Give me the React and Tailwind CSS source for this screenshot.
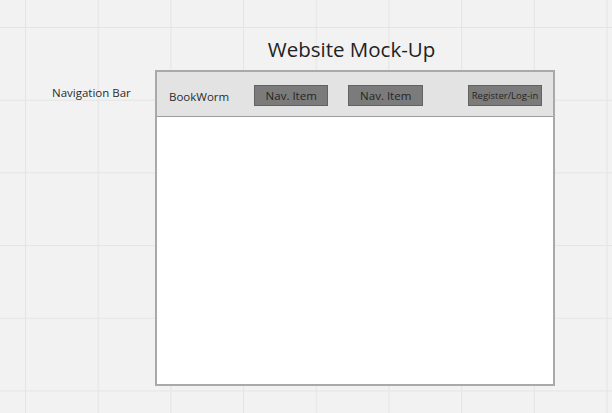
export default function App() {
  return (
    <div className="w-[612px] h-[413px] overflow-hidden bg-[#f2f2f2] bg-[linear-gradient(to_right,#e4e4e4_1px,transparent_1px),linear-gradient(to_bottom,#e4e4e4_1px,transparent_1px)] bg-[size:72.7px_72.7px] bg-[position:25px_27px] font-['Open_Sans',sans-serif] text-[#2b2b2b]">
      {/* Title */}
      <div className="pt-[35px] pl-[155px] w-[555px]">
        <h1 className="text-center pr-[7px] text-[20.5px] leading-[28px] text-[#222]">Website Mock-Up</h1>
      </div>

      <div className="flex mt-[7px]">
        {/* Annotation */}
        <div className="w-[155px] pl-[52px] pt-[14.5px] text-[11.5px] leading-[16px]">Navigation Bar</div>

        {/* Page frame */}
        <div className="w-[400px] h-[316px] bg-white border-2 border-[#a9a9a9]">
          <nav className="h-[45px] bg-[#e3e3e3] border-b border-[#9d9d9d] flex items-start pt-[13px] pl-[12px] pr-[11px]">
            <span className="mt-[3.5px] text-[11.5px] leading-[16px]">BookWorm</span>
            <button className="ml-[25px] w-[74px] h-[21px] flex items-center justify-center bg-[#7b7b7b] border border-[#626262] text-[11.5px] leading-[16px] text-[#252525]">
              Nav. Item
            </button>
            <button className="ml-[20px] w-[75px] h-[21px] flex items-center justify-center bg-[#7b7b7b] border border-[#626262] text-[11.5px] leading-[16px] text-[#252525]">
              Nav. Item
            </button>
            <button className="ml-auto w-[74px] h-[21px] flex items-center justify-center bg-[#7b7b7b] border border-[#626262] text-[9.5px] leading-[14px] text-[#252525]">
              Register/Log-in
            </button>
          </nav>
        </div>
      </div>
    </div>
  )
}
